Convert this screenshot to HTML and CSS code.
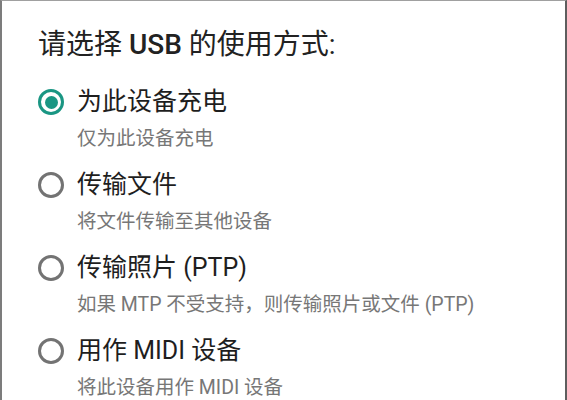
FILE: index.html
```html
<!DOCTYPE html>
<html lang="zh-CN">
<head>
    <meta charset="UTF-8">
    <meta name="viewport" content="width=device-width, initial-scale=1.0">
    <title>USB 偏好设置</title>
    <link rel="stylesheet" href="styles.css">
</head>
<body>
    <!-- USB mode dialog -->
    <div class="dialog">
        <h1 class="dialog-title">请选择 <span class="acronym">USB</span> 的使用方式:</h1>
        <ul class="options">
            <li class="option">
                <span class="radio checked"></span>
                <div class="option-text">
                    <div class="option-label">为此设备充电</div>
                    <div class="option-desc">仅为此设备充电</div>
                </div>
            </li>
            <li class="option">
                <span class="radio"></span>
                <div class="option-text">
                    <div class="option-label">传输文件</div>
                    <div class="option-desc">将文件传输至其他设备</div>
                </div>
            </li>
            <li class="option">
                <span class="radio"></span>
                <div class="option-text">
                    <div class="option-label">传输照片 (PTP)</div>
                    <div class="option-desc">如果 MTP 不受支持，则传输照片或文件 (PTP)</div>
                </div>
            </li>
            <li class="option">
                <span class="radio"></span>
                <div class="option-text">
                    <div class="option-label">用作 MIDI 设备</div>
                    <div class="option-desc">将此设备用作 MIDI 设备</div>
                </div>
            </li>
        </ul>
    </div>
</body>
</html>
```

FILE: styles.css
```css
/* Global Styling */
html, body {
    margin: 0;
    height: 100%;
    background: #ffffff;
}

body {
    font-family: Roboto, "Noto Sans CJK SC", sans-serif;
    color: #212121;
    overflow: hidden;
}

/* Dialog frame */
.dialog {
    box-sizing: border-box;
    height: 100%;
    border-top: 1px solid #a0a0a0;
    border-left: 2px solid #7c7c7c;
    border-right: 2px solid #5e5e5e;
    padding: 25px 0 0 36px;
}

.dialog-title {
    margin: 0 0 20px;
    font-size: 28px;
    font-weight: normal;
    line-height: 38px;
    color: #222222;
}

.dialog-title .acronym {
    font-weight: 500;
}

/* Option list */
.options {
    list-style: none;
    margin: 0;
    padding: 0;
}

.option {
    display: flex;
    align-items: flex-start;
    margin-bottom: 9px;
}

.radio {
    box-sizing: border-box;
    flex: none;
    width: 26px;
    height: 26px;
    margin: 5px 13px 0 0;
    border: 3px solid #737373;
    border-radius: 50%;
    display: flex;
    align-items: center;
    justify-content: center;
}

.radio.checked {
    border-color: #1a9683;
}

.radio.checked::after {
    content: "";
    width: 13px;
    height: 13px;
    border-radius: 50%;
    background: #1a9683;
}

.option-label {
    font-size: 25px;
    line-height: 36px;
    color: #1e1e1e;
}

.option-desc {
    font-size: 19.5px;
    line-height: 38px;
    color: #777777;
}
```
